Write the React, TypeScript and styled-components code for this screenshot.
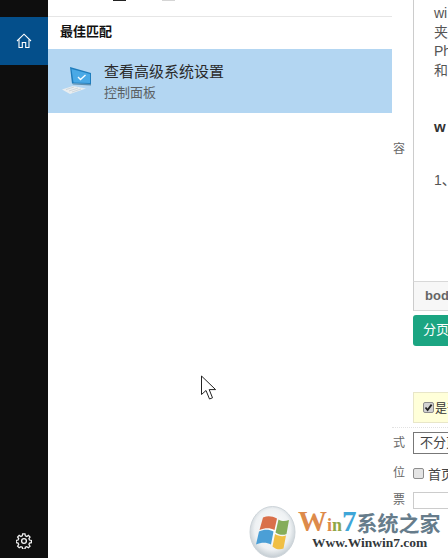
import React from "react";
import styled, { createGlobalStyle } from "styled-components";

const Global = createGlobalStyle`
  html, body { margin: 0; padding: 0; background: #fff; }
  #root { width: 448px; height: 558px; overflow: hidden; }
`;
const FONT = `"Liberation Sans", "Noto Sans CJK SC", sans-serif`;

const Screen = styled.div`
  position: relative;
  width: 448px;
  height: 558px;
  display: flex;
  overflow: hidden;
  background: #fff;
  font-family: ${FONT};
`;
const Rail = styled.nav`
  width: 48px;
  flex: none;
  background: #0e0e0e;
  display: flex;
  flex-direction: column;
  padding-top: 17px;
  box-sizing: border-box;
`;
const RailButton = styled.div`
  width: 48px;
  height: 48px;
  background: #044f8b;
  color: #fff;
  display: flex;
  align-items: center;
  justify-content: center;
`;
const RailSpacer = styled.div`
  flex: 1;
`;
const RailFoot = styled.div`
  width: 48px;
  height: 25px;
  color: #f2f2f2;
  display: flex;
  align-items: flex-start;
  justify-content: center;
`;
const Search = styled.main`
  width: 344px;
  flex: none;
  display: flex;
  flex-direction: column;
`;
const TopStrip = styled.div`
  height: 16px;
  border-bottom: 1px solid #e6e6e6;
  display: flex;
  gap: 36px;
  padding-left: 65px;
  overflow: hidden;
`;
const TopMark = styled.span<{ $c: string }>`
  display: block;
  width: 13px;
  height: 1px;
  background: ${(p) => p.$c};
`;
const SectionTitle = styled.h2`
  margin: 0;
  height: 32px;
  line-height: 30px;
  padding-left: 12px;
  font-size: 13px;
  font-weight: 700;
  color: #111;
`;
const Result = styled.div`
  height: 64px;
  background: #b3d6f2;
  display: flex;
  align-items: center;
  padding-left: 12px;
  gap: 12px;
`;
const ResultText = styled.div`
  display: flex;
  flex-direction: column;
  gap: 2px;
`;
const ResultTitle = styled.div`
  font-size: 15px;
  line-height: 21px;
  color: #2a2a2a;
`;
const ResultSub = styled.div`
  font-size: 13px;
  line-height: 18px;
  color: #5a5f63;
`;
const Right = styled.div`
  width: 56px;
  flex: none;
  display: flex;
  flex-direction: column;
`;
const Upper = styled.div`
  display: flex;
  height: 427px;
  flex: none;
  border-bottom: 1px dotted #e2e2e2;
  box-sizing: content-box;
`;
const Label = styled.div`
  width: 21px;
  flex: none;
  box-sizing: border-box;
  padding-left: 1px;
  font-size: 12px;
  line-height: 16px;
  color: #666;
`;
const UpperLabel = styled(Label)`
  padding-top: 141px;
`;
const Editor = styled.section`
  flex: 1;
  min-width: 0;
  display: flex;
  flex-direction: column;
  overflow: hidden;
`;
const EditorBox = styled.div`
  height: 282px;
  flex: none;
  box-sizing: border-box;
  padding: 4px 0 0 20px;
  border-left: 1px solid #ccc;
  border-bottom: 1px solid #d8d8d8;
  overflow: hidden;
  white-space: nowrap;
`;
const EditorLine = styled.div<{ $bold?: boolean; $gap?: number }>`
  font-weight: ${(p) => (p.$bold ? 700 : 400)};
  font-size: ${(p) => (p.$bold ? 15 : 14)}px;
  line-height: 19px;
  color: ${(p) => (p.$bold ? "#333" : "#555")};
  margin-top: ${(p) => p.$gap ?? 0}px;
`;
const PathBar = styled.div`
  height: 29px;
  flex: none;
  line-height: 28px;
  padding-left: 11px;
  background: #f7f7f7;
  border-left: 1px solid #ccc;
  border-bottom: 1px solid #d8d8d8;
  box-sizing: border-box;
  font-size: 13px;
  font-weight: 700;
  color: #666;
  white-space: nowrap;
`;
const GreenButton = styled.div`
  height: 31px;
  flex: none;
  margin-top: 4px;
  line-height: 30px;
  padding-left: 10px;
  background: #1ba582;
  border-radius: 3px 0 0 3px;
  color: #fff;
  font-size: 13px;
  white-space: nowrap;
`;
const Notice = styled.div`
  height: 31px;
  flex: none;
  margin-top: 46px;
  background: #ffffd9;
  border: 1px solid #e8e6c8;
  border-right: 0;
  box-sizing: border-box;
  display: flex;
  align-items: center;
  padding-left: 9px;
  font-size: 12px;
  color: #333;
  white-space: nowrap;
`;
const FormRow = styled.div<{ $h: number }>`
  height: ${(p) => p.$h}px;
  flex: none;
  display: flex;
  align-items: center;
  box-sizing: border-box;
`;
const Control = styled.div`
  flex: 1;
  min-width: 0;
  display: flex;
  align-items: center;
  overflow: hidden;
  font-size: 13px;
  color: #444;
  white-space: nowrap;
`;
const Select = styled.div`
  width: 100%;
  height: 22px;
  line-height: 20px;
  padding-left: 6px;
  box-sizing: border-box;
  border: 1px solid #777;
  border-right: 0;
  background: #fff;
  font-size: 13px;
  color: #444;
`;
const Input = styled.div`
  width: 100%;
  height: 17px;
  box-sizing: border-box;
  border: 1px solid #ccc;
  border-right: 0;
  background: #fff;
`;
const Box = styled.span<{ $mr: number; $fill: string }>`
  width: 11px;
  height: 11px;
  margin-right: ${(p) => p.$mr}px;
  flex: none;
  box-sizing: border-box;
  border: 1px solid #8d8d8d;
  border-radius: 2px;
  background: ${(p) => p.$fill};
  display: flex;
  align-items: center;
  justify-content: center;
`;
const Logo = styled.div`
  position: absolute;
  left: 249px;
  top: 505px;
  width: 199px;
  height: 53px;
  display: flex;
  gap: 1px;
`;
const LogoText = styled.div`
  display: flex;
  flex-direction: column;
  padding-top: 4px;
`;
const Brand = styled.div`
  display: flex;
  align-items: baseline;
  height: 25px;
  line-height: 25px;
  white-space: nowrap;
  font-family: "Liberation Serif", "Noto Sans CJK SC", serif;
  font-weight: 700;
`;
const BrandLetter = styled.span<{ $c: string; $s: number }>`
  color: ${(p) => p.$c};
  font-size: ${(p) => p.$s}px;
`;
const BrandCjk = styled.span`
  color: #667c8b;
  font-family: "Noto Sans CJK SC", sans-serif;
  font-size: 21px;
`;
const Url = styled.div`
  font-family: "Liberation Serif", serif;
  font-weight: 700;
  font-size: 13.5px;
  line-height: 16px;
  margin-top: 1px;
  margin-left: 14px;
  color: #33383b;
  white-space: nowrap;
`;
const Pointer = styled.svg`
  position: absolute;
  left: 200px;
  top: 375px;
`;

const Monitor = () => (
  <svg width="32" height="32" viewBox="0 0 32 32">
    <path d="M10 2 L31 8 V19 L12 18.5 Z" fill="#1f7dbd" />
    <path d="M11.5 4 L30 9 V18 L13.5 17.5 Z" fill="#4aa9e6" />
    <path d="M12 18.5 L31 19 V20.5 L13 19.5 Z" fill="#5f8fae" />
    <path d="M18 12 L20.5 14.5 L25.5 10" fill="none" stroke="#f4fbff" strokeWidth="1.4" />
    <path d="M2 24.5 L13 21 L26 23.5 L10 29 Z" fill="#e9edef" />
    <path d="M6 24.6 L14 22 M9 26 L18 23 M12 27 L21 24" stroke="#c8d0d5" strokeWidth="0.8" />
  </svg>
);

const WinFlag = () => (
  <svg width="48" height="53" viewBox="0 0 48 53">
    <defs>
      <radialGradient id="orb" cx="50%" cy="45%" r="55%">
        <stop offset="0%" stopColor="#ffffff" />
        <stop offset="72%" stopColor="#eef1f3" />
        <stop offset="100%" stopColor="#c3ccd2" />
      </radialGradient>
    </defs>
    <ellipse cx="23.5" cy="27" rx="22.5" ry="25.5" fill="url(#orb)" stroke="#cdd4d9" />
    <path d="M14 12.5 C19 10.5 23 11 28 13.5 L25.5 25 C21 22.5 16 22.5 10.5 25 Z" fill="#d9704a" />
    <path d="M29.5 14.5 C33 16.5 36 16.5 40 15 L37.5 29 C34 30.5 30 30 26.5 27.5 Z" fill="#86ad5a" />
    <path d="M10 26.5 C15 24 20 24 24.5 26.5 L22 39.5 C17.5 37 12.5 37 7 39.5 Z" fill="#4b9fd6" />
    <path d="M26 29 C29.5 31 33 32 37 30.5 L34.5 43.5 C31 45 27 44.5 23.5 41.5 Z" fill="#f0bf45" />
  </svg>
);

export default function App() {
  return (
    <Screen>
      <Global />
      <Rail>
        <RailButton>
          <svg width="16" height="16" viewBox="0 0 16 16" fill="none" stroke="currentColor" strokeWidth="1.1">
            <path d="M1 8 L8 1.2 L15 8" />
            <path d="M3 6.5 V14.5 H6.3 V9.5 H9.7 V14.5 H13 V6.5" />
          </svg>
        </RailButton>
        <RailSpacer />
        <RailFoot>
          <svg width="16" height="16" viewBox="0 0 24 24" fill="none" stroke="currentColor" strokeWidth="2">
            <circle cx="12" cy="12" r="3.6" />
            <path d="M10.2 1.5 h3.6 l.6 3 2.2.9 2.6-1.7 2.5 2.5-1.7 2.6.9 2.2 3 .6 v3.6 l-3 .6-.9 2.2 1.7 2.6-2.5 2.5-2.6-1.7-2.2.9-.6 3 h-3.6 l-.6-3-2.2-.9-2.6 1.7-2.5-2.5 1.7-2.6-.9-2.2-3-.6 v-3.6 l3-.6.9-2.2-1.7-2.6 2.5-2.5 2.6 1.7 2.2-.9 z" transform="translate(0.2 0) scale(0.96)" />
          </svg>
        </RailFoot>
      </Rail>
      <Search>
        <TopStrip>
          <TopMark $c="#222" />
          <TopMark $c="#d5d5d5" />
        </TopStrip>
        <SectionTitle>最佳匹配</SectionTitle>
        <Result>
          <Monitor />
          <ResultText>
            <ResultTitle>查看高级系统设置</ResultTitle>
            <ResultSub>控制面板</ResultSub>
          </ResultText>
        </Result>
      </Search>
      <Right>
        <Upper>
          <UpperLabel>容</UpperLabel>
          <Editor>
            <EditorBox>
              <EditorLine>wi</EditorLine>
              <EditorLine>夹</EditorLine>
              <EditorLine>Ph</EditorLine>
              <EditorLine>和</EditorLine>
              <EditorLine $bold $gap={37}>w</EditorLine>
              <EditorLine $gap={35}>1、</EditorLine>
            </EditorBox>
            <PathBar>bod</PathBar>
            <GreenButton>分页符</GreenButton>
            <Notice>
              <Box $mr={1} $fill="#d2d2d2">
                <svg width="9" height="9" viewBox="0 0 9 9" fill="none" stroke="#222" strokeWidth="1.8">
                  <path d="M1.5 4.5 L3.6 7 L7.6 1.6" />
                </svg>
              </Box>
              是否
            </Notice>
          </Editor>
        </Upper>
        <FormRow $h={30}>
          <Label>式</Label>
          <Control><Select>不分页</Select></Control>
        </FormRow>
        <FormRow $h={30}>
          <Label>位</Label>
          <Control>
            <Box $mr={4} $fill="#e4e4e4" />
            首页
          </Control>
        </FormRow>
        <FormRow $h={24}>
          <Label>票</Label>
          <Control><Input /></Control>
        </FormRow>
      </Right>
      <Pointer width="18" height="26" viewBox="0 0 18 26">
        <path d="M1.5 1 V19.5 L6 15.5 L9.5 24 L12.5 22.8 L9.2 14.6 H15.6 Z" fill="#fff" stroke="#222" strokeWidth="1" />
      </Pointer>
      <Logo>
        <WinFlag />
        <LogoText>
          <Brand>
            <BrandLetter $c="#dd8a4a" $s={29}>W</BrandLetter>
            <BrandLetter $c="#dd8a4a" $s={18}>i</BrandLetter>
            <BrandLetter $c="#8fa646" $s={18}>n</BrandLetter>
            <BrandLetter $c="#3ea6d8" $s={29}>7</BrandLetter>
            <BrandCjk>系统之家</BrandCjk>
          </Brand>
          <Url>Www.Winwin7.com</Url>
        </LogoText>
      </Logo>
    </Screen>
  );
}
